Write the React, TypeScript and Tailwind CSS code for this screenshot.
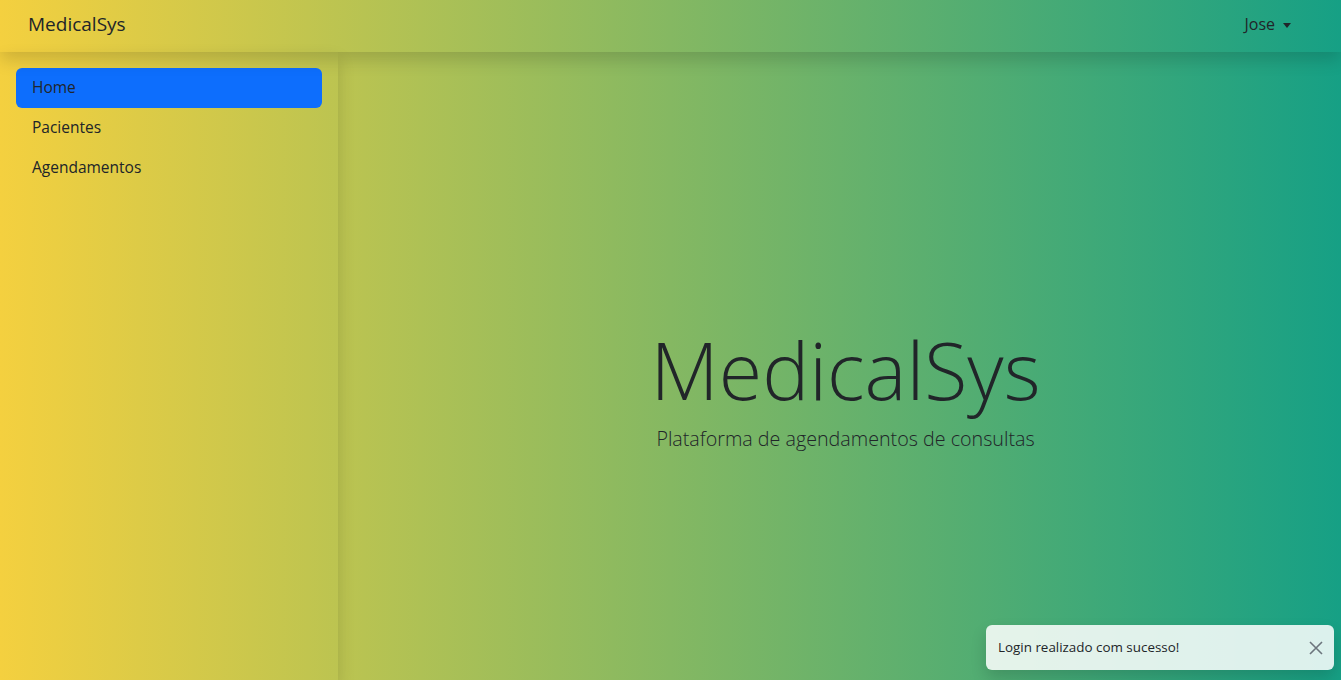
import React from "react";

export default function App() {
  return (
    <div
      className="relative flex h-[680px] w-full flex-col overflow-hidden bg-[linear-gradient(to_right,#f4d03f,#16a085)] text-[#212529]"
      style={{ fontFamily: "'Open Sans', 'Noto Sans', sans-serif" }}
    >
      <nav className="relative z-20 flex h-[52px] shrink-0 items-center justify-between pb-[4px] pl-[28px] pr-[50px] shadow-[0_8px_16px_rgba(0,0,0,0.15)]">
        <span className="text-[19px] leading-none">MedicalSys</span>
        <span className="flex items-center gap-[8px] text-[16px]">
          Jose
          <span className="mt-[2px] h-0 w-0 border-x-[4.5px] border-t-[5px] border-x-transparent border-t-[#212529]" />
        </span>
      </nav>
      <div className="flex min-h-0 flex-1">
        <aside className="relative z-10 flex w-[338px] shrink-0 flex-col px-[16px] pt-[16px] shadow-[0_8px_16px_rgba(0,0,0,0.15)]">
          <a className="flex h-[40px] items-center rounded-[6px] bg-[#0d6efd] px-[16px] text-[15.5px]">Home</a>
          <a className="flex h-[40px] items-center px-[16px] text-[15.5px]">Pacientes</a>
          <a className="flex h-[40px] items-center px-[16px] text-[15.5px]">Agendamentos</a>
        </aside>
        <main className="flex flex-1 flex-col items-center justify-center pl-[12px] pt-[44px]">
          <h1 className="text-[79px] font-light leading-[1.2]">MedicalSys</h1>
          <p className="mt-[6px] text-[19.7px] font-light">Plataforma de agendamentos de consultas</p>
        </main>
      </div>
      <div className="absolute bottom-[10px] right-[7px] z-30 flex h-[45px] w-[348px] items-center justify-between rounded-[6px] bg-[rgba(255,255,255,0.85)] pl-[12px] pr-[8px] shadow-[0_8px_16px_rgba(0,0,0,0.15)]">
        <span className="text-[13.4px]">Login realizado com sucesso!</span>
        <svg width="16" height="16" viewBox="0 0 16 16" className="mr-[2px]">
          <path d="M2 2 L14 14 M14 2 L2 14" stroke="#6c757d" strokeWidth="1.6" fill="none" />
        </svg>
      </div>
    </div>
  );
}
